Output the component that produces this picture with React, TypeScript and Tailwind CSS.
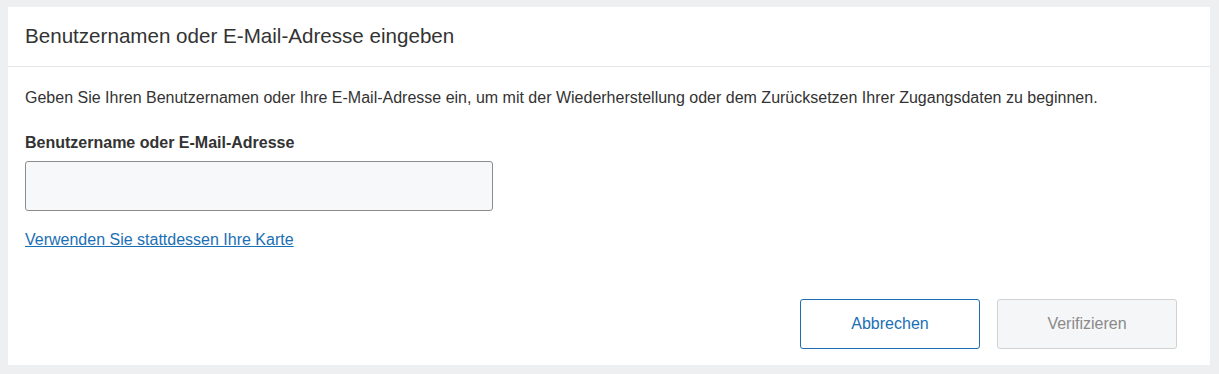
export default function App() {
  return (
    <div className="w-[1219px] h-[374px] bg-[#eeeff0] pt-[7px] pl-[8px] pr-[9px] pb-[9px]" style={{ fontFamily: '"Liberation Sans", Arial, sans-serif' }}>
      <div className="bg-white h-[358px] flex flex-col">
        <div className="h-[60px] border-b border-[#e6e7e8] flex items-center px-[17px]">
          <h1 className="text-[20.6px] text-[#333] font-normal leading-none">Benutzernamen oder E-Mail-Adresse eingeben</h1>
        </div>
        <div className="px-[17px] pt-[22px] flex flex-col">
          <p className="text-[16px] text-[#333] leading-[18px]">Geben Sie Ihren Benutzernamen oder Ihre E-Mail-Adresse ein, um mit der Wiederherstellung oder dem Zurücksetzen Ihrer Zugangsdaten zu beginnen.</p>
          <label className="mt-[27px] text-[16px] font-bold text-[#333] leading-[18px]">Benutzername oder E-Mail-Adresse</label>
          <input className="mt-[9px] w-[468px] h-[50px] border border-[#8c8c8c] rounded-[3px] bg-[#f7f8fa] outline-none px-3" />
          <a href="#" className="mt-[20px] text-[16px] text-[#1a6fb5] underline leading-[18px] self-start">Verwenden Sie stattdessen Ihre Karte</a>
          <div className="mt-[50px] flex justify-end gap-[17px] pr-[16px]">
            <button className="w-[180px] h-[50px] border border-[#1f6db1] rounded-[3px] bg-white text-[#1a6fb5] text-[16px]">Abbrechen</button>
            <button className="w-[180px] h-[50px] border border-[#cfd1d3] rounded-[3px] bg-[#f5f6f7] text-[#8a8a8a] text-[16px]">Verifizieren</button>
          </div>
        </div>
      </div>
    </div>
  );
}
